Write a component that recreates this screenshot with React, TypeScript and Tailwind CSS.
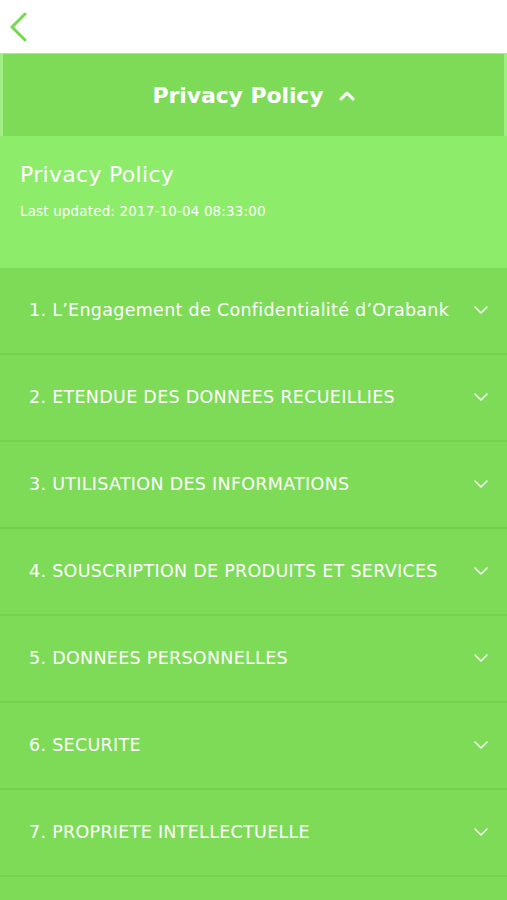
const sections = [
  "1. L\u2019Engagement de Confidentialit\u00e9 d\u2019Orabank",
  '2. ETENDUE DES DONNEES RECUEILLIES',
  '3. UTILISATION DES INFORMATIONS',
  '4. SOUSCRIPTION DE PRODUITS ET SERVICES',
  '5. DONNEES PERSONNELLES',
  '6. SECURITE',
  '7. PROPRIETE INTELLECTUELLE',
];

function Chevron({ up = false }: { up?: boolean }) {
  return (
    <svg width="16" height="10" viewBox="0 0 16 10" fill="none">
      <polyline
        points={up ? '2,8 8,2 14,8' : '2,2 8,8 14,2'}
        stroke="currentColor"
        strokeWidth={up ? 3 : 1.6}
        strokeLinecap="round"
        strokeLinejoin="round"
      />
    </svg>
  );
}

export default function App() {
  return (
    <div className="flex h-[900px] w-[507px] flex-col overflow-hidden bg-white font-['DejaVu_Sans',sans-serif] text-white">
      <header className="flex h-[54px] shrink-0 items-center border-b border-[#a6ec8c] pl-[9px]">
        <svg width="20" height="30" viewBox="0 0 20 30" fill="none">
          <polyline
            points="16,2 3,15 16,28"
            stroke="#74d94f"
            strokeWidth="3"
            strokeLinecap="round"
            strokeLinejoin="round"
          />
        </svg>
      </header>

      <div className="flex h-[82px] shrink-0 items-center justify-center gap-[15px] border-x-[3px] border-[#a0ee84] bg-[#7ddb57]">
        <span className="text-[22px] font-bold tracking-[-0.1px]">Privacy Policy</span>
        <span className="pt-[2px]">
          <Chevron up />
        </span>
      </div>

      <section className="h-[132px] shrink-0 bg-[#8ded6a] px-[20px] pt-[25px]">
        <h1 className="text-[22px] leading-[28px] tracking-[0.3px]">Privacy Policy</h1>
        <p className="mt-[12px] text-[13.5px] tracking-[0.15px]">Last updated: 2017-10-04 08:33:00</p>
      </section>

      <ul className="flex-1 bg-[#7edb58]">
        {sections.map((title) => (
          <li
            key={title}
            className="flex h-[87px] items-center justify-between border-b-2 border-[#74d14f] pl-[29px] pr-[18px]"
          >
            <span className="text-[17.5px] tracking-[0.3px]">{title}</span>
            <span className="-mt-[2px] opacity-90">
              <Chevron />
            </span>
          </li>
        ))}
      </ul>
    </div>
  );
}
